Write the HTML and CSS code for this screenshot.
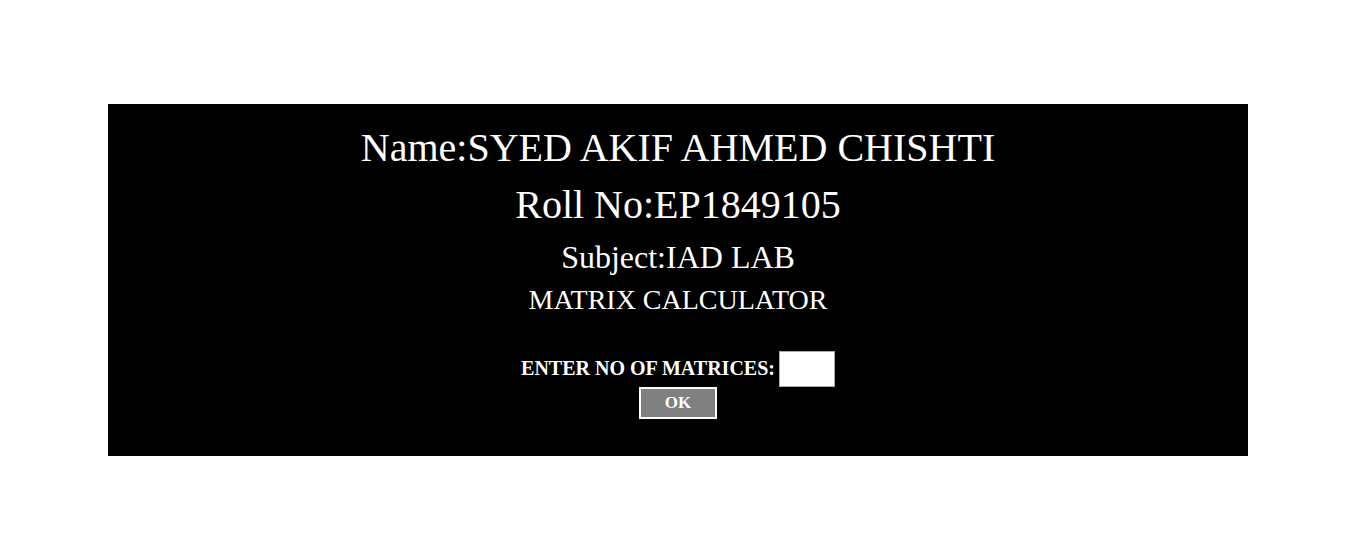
FILE: index.html
```html
<!DOCTYPE html>
<html>
<head>
<meta charset="utf-8">
<link rel="stylesheet" href="styles.css">
</head>
<body>
<div class="panel">
  <div class="name">Name:SYED AKIF AHMED CHISHTI</div>
  <div class="roll">Roll No:EP1849105</div>
  <div class="subject">Subject:IAD LAB</div>
  <div class="title">MATRIX CALCULATOR</div>
  <form class="form">
    <div class="row">
      <label class="label">ENTER NO OF MATRICES:</label>
      <input class="input" type="text">
    </div>
    <button type="button" class="ok">OK</button>
  </form>
</div>
</body>
</html>
```

FILE: styles.css
```css
html, body {
  margin: 0;
  background: #fff;
}
body {
  padding-top: 104px;
  font-family: "Liberation Serif", "Times New Roman", serif;
}
.panel {
  width: 1140px;
  height: 352px;
  margin-left: 108px;
  background: #000;
  color: #fff;
  box-sizing: border-box;
  padding-top: 21px;
  display: flex;
  flex-direction: column;
  align-items: center;
}
.name {
  font-size: 40px;
  line-height: 46px;
}
.roll {
  font-size: 40px;
  line-height: 46px;
  margin-top: 11px;
}
.subject {
  font-size: 32px;
  line-height: 36px;
  margin-top: 11px;
}
.title {
  font-size: 28px;
  line-height: 32px;
  margin-top: 9px;
}
.form {
  margin-top: 35px;
  display: flex;
  flex-direction: column;
  align-items: center;
}
.row {
  display: flex;
  align-items: flex-end;
}
.label {
  font-size: 20px;
  font-weight: bold;
  margin-right: 4px;
  line-height: 22px;
  margin-bottom: 8px;
}
.input {
  width: 56px;
  height: 36px;
  box-sizing: border-box;
  border: 1px solid #aaa;
  background: #fff;
  padding: 0;
  margin: 0;
}
.ok {
  width: 78px;
  height: 32px;
  box-sizing: border-box;
  background: #808080;
  border: 2px solid #fff;
  color: #fff;
  font-family: "Liberation Serif", "Times New Roman", serif;
  font-weight: bold;
  font-size: 17px;
  padding: 0;
  margin: 0;
}
```
